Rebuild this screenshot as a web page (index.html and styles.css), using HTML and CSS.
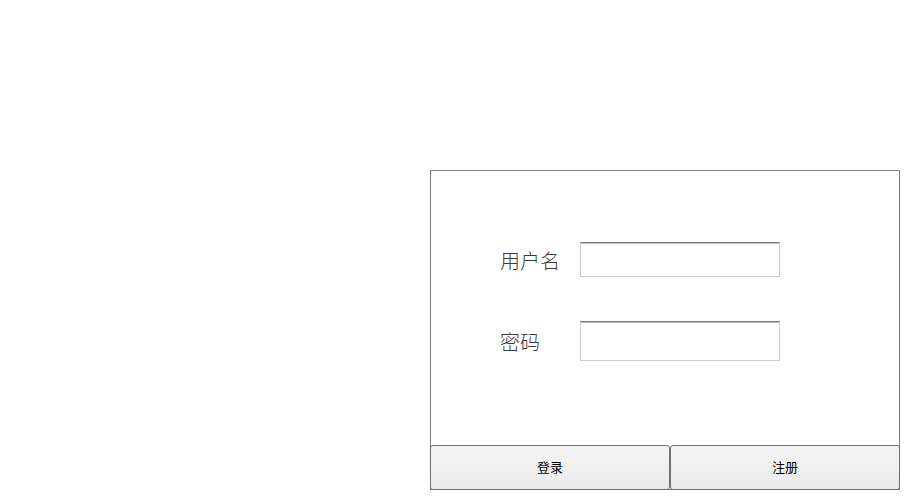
FILE: index.html
```html
<!DOCTYPE html>
<html lang="zh">
<head>
<meta charset="utf-8">
<title>登录</title>
<link rel="stylesheet" href="styles.css">
</head>
<body>
<div class="page">
  <div class="panel">
    <div class="form">
      <div class="row row-user">
        <label class="label">用户名</label>
        <input class="field field-user" type="text">
      </div>
      <div class="row row-pass">
        <label class="label">密码</label>
        <input class="field field-pass" type="password">
      </div>
    </div>
    <div class="actions">
      <button class="btn btn-login">登录</button>
      <button class="btn btn-register">注册</button>
    </div>
  </div>
</div>
</body>
</html>
```
FILE: styles.css
```css
html, body {
  margin: 0;
  padding: 0;
  background: #ffffff;
}
body {
  font-family: "Noto Sans CJK SC", "Noto Sans", sans-serif;
}
.page {
  padding: 170px 0 0 430px;
}
.panel {
  box-sizing: border-box;
  width: 470px;
  height: 320px;
  border: 1px solid #7f7f7f;
  display: flex;
  flex-direction: column;
}
.form {
  flex: 1;
  padding: 71px 0 0 69px;
  display: flex;
  flex-direction: column;
  gap: 44px;
}
.row {
  display: flex;
  align-items: center;
}
.label {
  width: 80px;
  font-size: 20px;
  font-weight: 300;
  line-height: 1;
  color: #3a3a3a;
}
.row-user .label { margin-top: 2px; }
.row-pass .label { margin-top: 1px; }
.field {
  box-sizing: border-box;
  width: 200px;
  margin: 0;
  padding: 0 4px;
  border: 1px solid #cfcfcf;
  border-top-color: #7a7a7a;
  box-shadow: inset 0 1px 0 #bdbdbd;
  background: #ffffff;
  outline: none;
}
.field-user { height: 35px; }
.field-pass { height: 40px; }
.actions {
  display: flex;
  height: 45px;
  margin: 0 -1px -1px -1px;
}
.btn {
  box-sizing: border-box;
  height: 45px;
  margin: 0;
  padding: 0 0 2px 0;
  border: 1px solid #707070;
  border-radius: 3px;
  background: linear-gradient(#f4f4f4, #ebebeb);
  font-family: "Noto Sans CJK SC", sans-serif;
  font-size: 13px;
  color: #000000;
}
.btn-login { width: 240px; }
.btn-register { width: 230px; }
```
